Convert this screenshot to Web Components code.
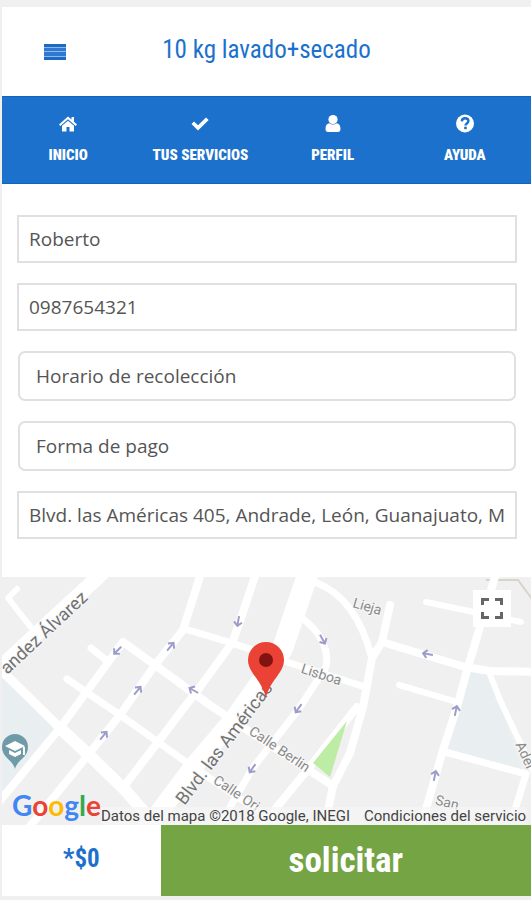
<!DOCTYPE html>
<html lang="es">
<head>
<meta charset="utf-8">
<meta name="viewport" content="width=device-width, initial-scale=1">
<title>10 kg lavado+secado</title>
<style>
  body {
    margin: 0;
    background: #f0f0f0;
    color: #555;
    font-family: "Open Sans", sans-serif;
    --blue: #1b71cb;
    --green: #74a444;
    --condensed: "Roboto Condensed", "Open Sans Condensed", "Liberation Sans Narrow", sans-serif;
  }
</style>
</head>
<body>
<order-page>
  <order-header slot="header" heading="10 kg lavado+secado"></order-header>
  <tab-bar slot="header">
    <tab-link icon="home">INICIO</tab-link>
    <tab-link icon="check">TUS SERVICIOS</tab-link>
    <tab-link icon="user">PERFIL</tab-link>
    <tab-link icon="help">AYUDA</tab-link>
  </tab-bar>
  <order-form></order-form>
  <city-map></city-map>
  <order-footer slot="footer" price="*$0">solicitar</order-footer>
</order-page>

<script>
const ICONS = {
  home: '<path d="M10 2.500 1 10.500l1.300 1.500L10 5.300l7.700 6.700L19 10.500l-3-2.700V3h-2.500v2.600z"/><path d="M10 6.700 4 11.800V17.500h4.500V13h3v4.500H16v-5.700z"/>',
  check: '<path d="M1.500 10 4 7.500l4 3.800 8-7.800 2.700 2.600L8 16.500z"/>',
  user: '<circle cx="10" cy="5.500" r="4.600"/><path d="M2.500 15c0-3.500 1.500-5.500 4-5.700 2 1.600 5 1.600 7 0 2.500.2 4 2.200 4 5.700 0 2-1 3-2.500 3H5c-1.500 0-2.500-1-2.500-3z"/>',
  help: '<circle cx="10" cy="9.500" r="9"/><path d="M6.800 7.300C7 5.200 8.300 4.300 10.100 4.300c2 0 3.300 1.100 3.300 2.800 0 2.300-2.900 2.400-2.900 4.400" fill="none" stroke="#1b71cb" stroke-width="2.400"/><rect x="9.200" y="12.700" width="2.600" height="2.500" fill="#1b71cb"/>'
};

class OrderPage extends HTMLElement {
  constructor() {
    super();
    this.attachShadow({ mode: "open" });
    this.shadowRoot.innerHTML = `
      <style>
        :host{display:flex;flex-direction:column;min-height:100vh;box-sizing:border-box;padding:7px 0 4px 2px;}
        main{flex:1;display:flex;flex-direction:column;background:#fff;}
      </style>
      <slot name="header"></slot>
      <main><slot></slot></main>
      <slot name="footer"></slot>
    `;
  }
}

class OrderHeader extends HTMLElement {
  constructor() {
    super();
    this.attachShadow({ mode: "open" });
  }
  connectedCallback() {
    this.shadowRoot.innerHTML = `
      <style>
        :host{display:block;background:#fff;}
        header{display:grid;grid-template-columns:72px 1fr 72px;align-items:center;height:89px;}
        button{justify-self:end;display:flex;padding:4px 8px;border:0;background:none;cursor:pointer;}
        h1{margin:0;padding-bottom:4px;text-align:center;font:400 25px/36px var(--condensed);color:var(--blue);}
      </style>
      <header>
        <button aria-label="Menú">
          <svg width="22" height="16" viewBox="0 0 22 16" aria-hidden="true">
            <path fill="#8fb8e8" d="M0 0h22v16H0z"/>
            <path fill="#1b6bc6" d="M0 0h22v3H0zM0 13h22v3H0z"/>
            <path fill="#2f7ad0" d="M0 4h22v3H0zM0 8h22v4H0z"/>
          </svg>
        </button>
        <h1>${this.getAttribute("heading")}</h1>
      </header>
    `;
  }
}

class TabBar extends HTMLElement {
  constructor() {
    super();
    this.attachShadow({ mode: "open" });
    this.shadowRoot.innerHTML = `
      <style>
        :host{display:block;background:var(--blue);}
        nav{display:flex;height:86px;border:1px solid #1263bf;border-width:1px 0;}
      </style>
      <nav><slot></slot></nav>
    `;
  }
}

class TabLink extends HTMLElement {
  constructor() {
    super();
    this.attachShadow({ mode: "open" });
  }
  connectedCallback() {
    this.shadowRoot.innerHTML = `
      <style>
        :host{display:block;flex:1 1 0;}
        a{display:flex;flex-direction:column;align-items:center;gap:10px;padding-top:17px;color:#fff;text-decoration:none;white-space:nowrap;font:900 15px/22px var(--condensed);}
        svg{display:block;fill:currentColor;}
      </style>
      <a href="#"><svg width="20" height="20" viewBox="0 0 20 20" aria-hidden="true">${ICONS[this.getAttribute("icon")]}</svg><span><slot></slot></span></a>
    `;
  }
}

class OrderForm extends HTMLElement {
  constructor() {
    super();
    this.attachShadow({ mode: "open" });
    this.shadowRoot.innerHTML = `
      <style>
        :host{display:block;}
        form{display:flex;flex-direction:column;gap:20px;padding:31px 14px 38px 15px;}
        label{display:flex;}
        input,select{flex:1;min-width:0;box-sizing:border-box;margin:0;border:2px solid #e0e0e0;background:#fff;color:#555;font:400 19px/24px "Open Sans",sans-serif;}
        input{height:48px;padding:0 10px;}
        select{height:50px;margin:0 1px;padding:0 16px;border-radius:7px;appearance:none;}
      </style>
      <form>
        <label><input aria-label="Nombre" value="Roberto"></label>
        <label><input type="tel" aria-label="Teléfono" value="0987654321"></label>
        <label><select aria-label="Horario de recolección"><option>Horario de recolección</option></select></label>
        <label><select aria-label="Forma de pago"><option>Forma de pago</option></select></label>
        <label><input aria-label="Dirección" value="Blvd. las Américas 405, Andrade, León, Guanajuato, México"></label>
      </form>
    `;
  }
}

// one-way street marks: x, y, heading in degrees clockwise from north
const ARROWS = [
  [117, 651, 225], [171, 646, 40], [138, 690, 40], [238, 622, 190], [323, 640, 150], [193, 690, 300],
  [104, 735, 40], [298, 709, 215], [252, 769, 215], [427, 654, 280], [456, 710, 12], [435, 775, 12]
];

class CityMap extends HTMLElement {
  constructor() {
    super();
    this.attachShadow({ mode: "open" });
    const arrows = ARROWS.map(([x, y, r]) =>
      `<path transform="translate(${x} ${y}) rotate(${r})" d="M0 6V-4M-4 0 0-4 4 0"/>`).join("");
    this.shadowRoot.innerHTML = `
      <style>
        :host{display:flex;flex:1;min-height:248px;position:relative;overflow:hidden;background:#f0f0f0;}
        .map{position:absolute;inset:0;width:100%;height:100%;}
        .roads{fill:none;stroke:#fff;stroke-width:8;stroke-linejoin:round;stroke-linecap:round;}
        .arrows{fill:none;stroke:#9d9dcb;stroke-width:2;}
        .labels{fill:#8a8a8a;font:400 14px Roboto,sans-serif;text-anchor:middle;stroke:#f8f8f8;stroke-width:2;paint-order:stroke;}
        .labels .big{font-size:18px;fill:#737373;}
        .full{position:absolute;top:13px;right:20px;display:flex;padding:8px;border:0;background:#fff;cursor:pointer;}
        .bar{position:relative;align-self:flex-end;flex:1;display:flex;align-items:flex-end;justify-content:space-between;padding:0 6px 0 10px;}
        .logo{padding-bottom:4px;font:700 28px/32px Lato,sans-serif;text-decoration:none;}
        .b{color:#4285f4}.r{color:#ea4335}.y{color:#fbbc05}.g{color:#34a853}
        .credits{display:flex;gap:14px;font:400 15px/18px Roboto,sans-serif;color:#444;white-space:nowrap;background:rgba(245,245,245,.7);}
        .credits a{color:inherit;text-decoration:none;}
      </style>
      <svg class="map" viewBox="2 577 529 248" preserveAspectRatio="xMidYMid slice" role="img" aria-label="Mapa">
        <rect x="2" y="577" width="529" height="248" fill="#f0f0f0"/>
        <path fill="#e9eef0" d="M2 678 60 728 2 800zM468 670h20l35 100-78-22z"/>
        <path fill="none" stroke="#d8d4cc" stroke-width="2" d="M486 580h32l14 19"/>
        <g class="roads">
          <path stroke-width="15" d="M-10 677 98 577 110 565"/>
          <path stroke-width="6" d="M17 589 8 598 37 635"/>
          <path stroke-width="9" d="M2 671 60 728"/>
          <path stroke-width="12" d="M60 728 91 757 125 790 160 830"/>
          <path d="M-2 803 60 728 88 690 123 642 155 665 207 703 235 722 333 786"/>
          <path stroke-width="7" d="M91 648 106 660M67 679 120 715 158 742 193 767 290 832"/>
          <path d="M202 570 183 630 155 665 120 715 88 755 27 830"/>
          <path d="M257 570 238 627 232 643 200 687 180 713 158 742 125 785"/>
          <path stroke-width="7" d="M185 629 232 643 290 663 365 687"/>
          <path stroke-width="21" d="M311 565 282 650"/>
          <path stroke-width="19" d="M282 650 260 682 233 720 193 767 146 830"/>
          <path stroke-width="7" d="M317 583C345 594 362 622 371 655"/>
          <path stroke-width="7" d="M303 619C318 630 330 648 326 667L298 710 252 769 217 830"/>
          <path d="M390 605 382 642 372 658 363 707 350 753 333 786 324 830"/>
          <path d="M357 707 313 763 258 830"/>
          <path d="M382 642 465 667 490 671 540 672"/>
          <path d="M497 570 480 627 468 667 457 707 443 750 420 830"/>
          <path stroke-width="6" d="M426 602 521 622M399 685 457 702"/>
          <path stroke-width="6" d="M489 672 500 700 540 785"/>
          <path stroke-width="7" d="M445 752 526 774 515 810"/>
        </g>
        <path fill="#bdeca4" d="M347 721 313 763 330 777z"/>
        <g class="arrows">${arrows}</g>
        <g class="labels">
          <text class="big" transform="translate(48 637) rotate(-43)">andez Álvarez</text>
          <text class="big" transform="translate(229 747) rotate(-53)">Blvd. las Américas</text>
          <text transform="translate(320 679) rotate(18)">Lisboa</text>
          <text transform="translate(366 611) rotate(16)">Lieja</text>
          <text transform="translate(277 753) rotate(34)">Calle Berlin</text>
          <text transform="translate(234 797) rotate(34)">Calle Ori</text>
          <text transform="translate(521 757) rotate(66)">Adel</text>
          <text transform="translate(446 807) rotate(14)">San</text>
        </g>
        <path fill="#6f9ba8" d="M15 769C13 760 2 758 2 747a13 13 0 0 1 26 0c0 11-11 13-13 22z"/>
        <path fill="#fff" d="M5 746 15 741 25 746 15 751zM9 750 15 753 21 750V754L15 757 9 754zM23 747h2v8h-2z"/>
        <path fill="#ea4335" d="M266 698C262 680 248 673 248 660a18 18 0 0 1 36 0c0 13-14 20-18 38z"/>
        <circle cx="266" cy="660" r="7" fill="#811411"/>
      </svg>
      <button class="full" aria-label="Pantalla completa">
        <svg width="22" height="21" viewBox="0 0 22 21" fill="none" stroke="#666" stroke-width="3" aria-hidden="true">
          <path d="M1.500 7V1.500H8M14 1.500h6.500V7M20.500 14v5.500H14M8 19.500H1.500V14"/>
        </svg>
      </button>
      <div class="bar">
        <a class="logo" href="#"><span class="b">G</span><span class="r">o</span><span class="y">o</span><span class="b">g</span><span class="g">l</span><span class="r">e</span></a>
        <div class="credits"><span>Datos del mapa ©2018 Google, INEGI</span><a href="#">Condiciones del servicio</a></div>
      </div>
    `;
  }
}

class OrderFooter extends HTMLElement {
  constructor() {
    super();
    this.attachShadow({ mode: "open" });
  }
  connectedCallback() {
    this.shadowRoot.innerHTML = `
      <style>
        :host{display:flex;height:71px;background:#fff;}
        output{flex:3;display:grid;place-items:center;padding-bottom:4px;font:700 25px/36px var(--condensed);color:var(--blue);}
        button{flex:7;border:0;padding:0;background:var(--green);color:#fff;font:700 35px/40px var(--condensed);cursor:pointer;}
      </style>
      <output>${this.getAttribute("price")}</output>
      <button><slot></slot></button>
    `;
  }
}

customElements.define("order-page", OrderPage);
customElements.define("order-header", OrderHeader);
customElements.define("tab-bar", TabBar);
customElements.define("tab-link", TabLink);
customElements.define("order-form", OrderForm);
customElements.define("city-map", CityMap);
customElements.define("order-footer", OrderFooter);
</script>
</body>
</html>
